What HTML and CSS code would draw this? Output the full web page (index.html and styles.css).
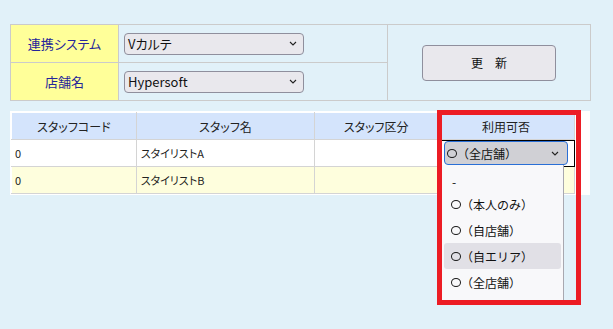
FILE: index.html
```html
<!DOCTYPE html>
<html lang="ja">
<head>
<meta charset="utf-8">
<link rel="stylesheet" href="styles.css">
</head>
<body>
<table class="cond">
  <tr>
    <td class="lbl">連携システム</td>
    <td class="fld"><div class="sel">Vカルテ<svg class="chev" viewBox="0 0 8 5" width="8" height="5"><path d="M1 1l3 3 3-3" fill="none" stroke="#222" stroke-width="1.1"/></svg></div></td>
    <td class="act" rowspan="2"><div class="btn">更　新</div></td>
  </tr>
  <tr>
    <td class="lbl">店舗名</td>
    <td class="fld"><div class="sel">Hypersoft<svg class="chev" viewBox="0 0 8 5" width="8" height="5"><path d="M1 1l3 3 3-3" fill="none" stroke="#222" stroke-width="1.1"/></svg></div></td>
  </tr>
</table>

<div class="grid-wrap">
  <table class="grid">
    <tr class="head">
      <th class="c1">スタッフコード</th>
      <th class="c2">スタッフ名</th>
      <th class="c3">スタッフ区分</th>
      <th class="c4">利用可否</th>
    </tr>
    <tr class="row">
      <td>0</td>
      <td>スタイリストA</td>
      <td></td>
      <td class="focus"><div class="sel sel-open"><span class="opt"><span class="circ" aria-label="○"></span>（全店舗）</span><svg class="chev" viewBox="0 0 8 5" width="8" height="5"><path d="M1 1l3 3 3-3" fill="none" stroke="#222" stroke-width="1.1"/></svg></div></td>
    </tr>
    <tr class="row alt">
      <td>0</td>
      <td>スタイリストB</td>
      <td></td>
      <td></td>
    </tr>
  </table>
  <ul class="menu">
    <li class="first">-</li>
    <li><span class="circ" aria-label="○"></span>（本人のみ）</li>
    <li><span class="circ" aria-label="○"></span>（自店舗）</li>
    <li class="hover"><span class="circ" aria-label="○"></span>（自エリア）</li>
    <li><span class="circ" aria-label="○"></span>（全店舗）</li>
  </ul>
  <div class="mark"></div>
</div>
</body>
</html>
```

FILE: styles.css
```css
* { box-sizing: border-box; }
html { height: 100%; }
body {
  margin: 0;
  min-height: 100%;
  padding: 24px 0 0 10px;
  background: #e1f1f9;
  font-family: "Noto Sans CJK JP", "Noto Sans", sans-serif;
  font-feature-settings: "palt";
  color: #222;
}
.cond {
  border-collapse: collapse;
  width: 581px;
}
.cond td {
  border: 1px solid #cbcbcb;
  padding: 0;
  height: 38px;
}
.lbl {
  width: 108px;
  background: #ffff99;
  color: #25259a;
  text-align: center;
  font-size: 13px;
}
.fld {
  width: 269px;
}
.sel {
  display: flex;
  align-items: center;
  justify-content: space-between;
  width: 180px;
  height: 22px;
  margin-left: 5px;
  padding: 0 6px 0 3px;
  background: #e9e8ed;
  border: 1px solid #8f8f9d;
  border-radius: 4px;
  font-size: 13px;
  color: #111;
  font-family: "Noto Sans CJK JP", sans-serif;
}
.act { text-align: center; }
.btn {
  display: inline-flex;
  align-items: center;
  justify-content: center;
  width: 134px;
  height: 36px;
  background: #e9e8ed;
  border: 1px solid #8f8f9d;
  border-radius: 4px;
  font-size: 12px;
  color: #111;
}
.grid-wrap {
  position: relative;
  margin-top: 10px;
  width: 580px;
  background: #fff;
  padding: 1px;
}
.grid {
  border-collapse: collapse;
  width: 564px;
  font-size: 11px;
}
.grid th, .grid td {
  border: 1px solid #d4d4d4;
  padding: 0 0 0 3px;
  height: 27px;
  text-align: left;
}
.grid tr:first-child th { border-top-color: #fff; }
.grid th:first-child, .grid td:first-child { border-left-color: #fff; }
.head th {
  background: #d4e4fc;
  font-weight: normal;
  font-size: 12px;
  text-align: center;
  padding: 0;
  color: #222;
}
.c1 { width: 125px; }
.c2 { width: 179px; }
.c3 { width: 123px; }
.c4 { width: 137px; }
.row td { background: #fff; color: #222; }
.row td:nth-child(2) { padding-left: 4px; }
.row.alt td { background: #fefedd; }
.focus {
  outline: 1px solid #000;
  outline-offset: -1px;
  padding: 0 !important;
}
.sel-open {
  width: 124px;
  height: 24px;
  margin-left: 6px;
  padding: 0 8px 0 2px;
  background: #d0d0d5;
  border: 1px solid #2a6fd6;
  border-radius: 4px;
  font-size: 12px;
  font-feature-settings: normal;
}
.opt { display: inline-flex; align-items: center; }
.circ {
  display: inline-block;
  width: 10px;
  height: 9px;
  border: 1.4px solid #1a1a1a;
  border-radius: 50%;
}
.menu {
  position: absolute;
  left: 432px;
  top: 54px;
  width: 122px;
  margin: 0;
  padding: 4px 2px 5px 2px;
  list-style: none;
  background: #f8f8fa;
  border-right: 1px solid #a8a8b0;
  border-bottom: 1px solid #a8a8b0;
  font-size: 12px;
  color: #111;
  font-feature-settings: normal;
  z-index: 1;
}
.menu li {
  display: flex;
  align-items: center;
  height: 26px;
  padding-left: 7px;
  border-radius: 3px;
}
.menu li.first { height: 22px; padding-top: 3px; padding-left: 8px; }
.menu li.hover { background: #e1e0e6; }
.mark {
  position: absolute;
  left: 427px;
  top: -1px;
  width: 144px;
  height: 195px;
  border: 5px solid #ec1c24;
  z-index: 2;
}
```
